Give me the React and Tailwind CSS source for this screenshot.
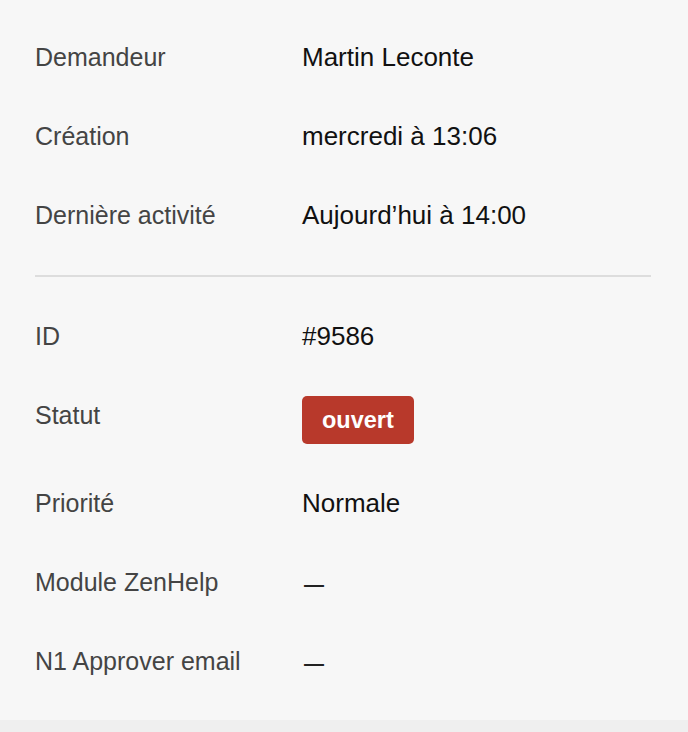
import React from 'react';

const rowsTop = [
    { label: 'Demandeur', value: 'Martin Leconte' },
    { label: 'Création', value: 'mercredi à 13:06' },
    { label: 'Dernière activité', value: 'Aujourd\u2019hui à 14:00' },
];

const Row = ({ label, children }) => (
    <div className="flex items-start py-[20px] leading-[39px]">
        <div className="w-[267px] shrink-0 text-[25px] text-[#444]">{label}</div>
        <div className="text-[26px] text-[#111]">{children}</div>
    </div>
);

const Dash = () => <span className="ml-[2px] text-[20px] font-bold leading-[36px] text-[#222]">—</span>;

const App = () => {
    return (
        <div className="min-h-screen bg-[#efefef]" style={{ fontFamily: '"Liberation Sans", Arial, sans-serif' }}>
            <div className="bg-[#f7f7f7] pl-[35px] pr-[37px] pt-[18px] pb-[19px]">
                {rowsTop.map((r) => (
                    <Row key={r.label} label={r.label}>
                        {r.value}
                    </Row>
                ))}
                <div className="my-[20px] h-[2px] bg-[#dddddd]" />
                <Row label="ID">#9586</Row>
                <Row label="Statut">
                    <span className="block rounded-[5px] bg-[#b8392b] px-[20px] text-[23.5px] font-bold leading-[48px] text-white">
                        ouvert
                    </span>
                </Row>
                <Row label="Priorité">Normale</Row>
                <Row label="Module ZenHelp">
                    <Dash />
                </Row>
                <Row label="N1 Approver email">
                    <Dash />
                </Row>
            </div>
        </div>
    );
};

export default App;
